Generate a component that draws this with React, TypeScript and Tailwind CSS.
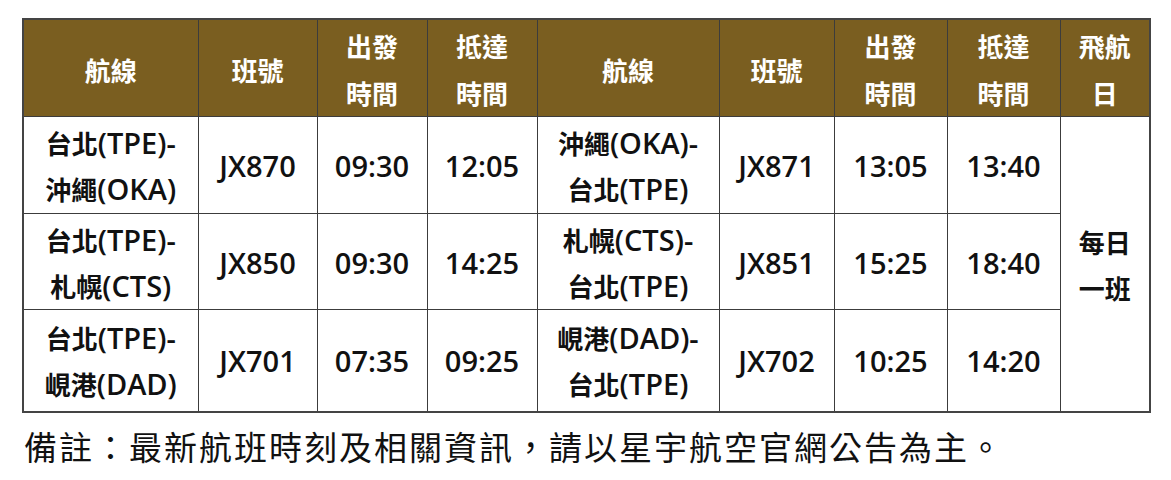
import React from "react";

const rows = [
  {
    h: "h-[97px]",
    out: ["台北(TPE)-", "沖繩(OKA)"],
    outNo: "JX870",
    outDep: "09:30",
    outArr: "12:05",
    back: ["沖繩(OKA)-", "台北(TPE)"],
    backNo: "JX871",
    backDep: "13:05",
    backArr: "13:40",
  },
  {
    h: "h-[96px]",
    out: ["台北(TPE)-", "札幌(CTS)"],
    outNo: "JX850",
    outDep: "09:30",
    outArr: "14:25",
    back: ["札幌(CTS)-", "台北(TPE)"],
    backNo: "JX851",
    backDep: "15:25",
    backArr: "18:40",
  },
  {
    h: "h-[102px]",
    out: ["台北(TPE)-", "峴港(DAD)"],
    outNo: "JX701",
    outDep: "07:35",
    outArr: "09:25",
    back: ["峴港(DAD)-", "台北(TPE)"],
    backNo: "JX702",
    backDep: "10:25",
    backArr: "14:20",
  },
];

// latin runs get a wider font, like the original's mixed typeface
function Mixed({ text }: { text: string }) {
  return (
    <>
      {text.split(/([\x00-\x7F]+)/).map((part, i) =>
        /^[\x00-\x7F]+$/.test(part) ? (
          <span key={i} className="font-['Open_Sans',sans-serif] font-semibold text-[29px]">
            {part}
          </span>
        ) : (
          part
        )
      )}
    </>
  );
}

const th = "border border-[#3c3c3c] text-white font-bold text-center align-middle leading-[47px] pt-[2px]";
const td = "border border-[#3c3c3c] text-[#111] font-bold text-center align-middle leading-[46px] pt-[2px]";

export default function App() {
  return (
    <div className="bg-white w-[1171px] h-[480px] pl-[22px] pt-[18px] font-['Noto_Sans_CJK_TC',sans-serif]">
      <table className="table-fixed border-collapse border-2 border-[#444] w-[1127px] text-[26px]">
        <colgroup>
          <col className="w-[175px]" />
          <col className="w-[119px]" />
          <col className="w-[110px]" />
          <col className="w-[110px]" />
          <col className="w-[182px]" />
          <col className="w-[115px]" />
          <col className="w-[113px]" />
          <col className="w-[113px]" />
          <col className="w-[90px]" />
        </colgroup>
        <thead>
          <tr className="h-[97px] bg-[#7a5e20]">
            <th className={th}>航線</th>
            <th className={th}>班號</th>
            <th className={th}>出發<br />時間</th>
            <th className={th}>抵達<br />時間</th>
            <th className={th}>航線</th>
            <th className={th}>班號</th>
            <th className={th}>出發<br />時間</th>
            <th className={th}>抵達<br />時間</th>
            <th className={th}>飛航<br />日</th>
          </tr>
        </thead>
        <tbody>
          {rows.map((r, i) => (
            <tr key={r.outNo} className={r.h}>
              <td className={td}>
                <Mixed text={r.out[0]} />
                <br />
                <Mixed text={r.out[1]} />
              </td>
              <td className={td}><Mixed text={r.outNo} /></td>
              <td className={td}><Mixed text={r.outDep} /></td>
              <td className={td}><Mixed text={r.outArr} /></td>
              <td className={td}>
                <Mixed text={r.back[0]} />
                <br />
                <Mixed text={r.back[1]} />
              </td>
              <td className={td}><Mixed text={r.backNo} /></td>
              <td className={td}><Mixed text={r.backDep} /></td>
              <td className={td}><Mixed text={r.backArr} /></td>
              {i === 0 && (
                <td rowSpan={3} className={td}>
                  每日<br />一班
                </td>
              )}
            </tr>
          ))}
        </tbody>
      </table>
      <p className="mt-[12px] pl-[2px] text-[33px] leading-[42px] tracking-[2px] text-[#111]">
        備註：最新航班時刻及相關資訊，請以星宇航空官網公告為主。
      </p>
    </div>
  );
}
